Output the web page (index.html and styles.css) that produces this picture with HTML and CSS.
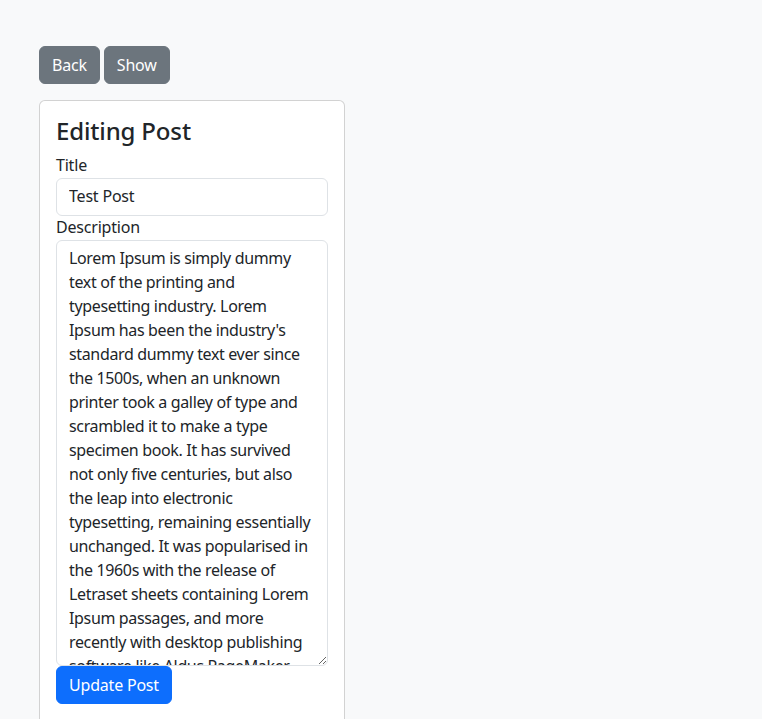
FILE: index.html
```html
<!DOCTYPE html>
<html lang="en">
<head>
<meta charset="utf-8">
<title>Editing Post</title>
<link rel="stylesheet" href="styles.css">
</head>
<body>
<div class="page">
  <div class="actions">
    <a class="btn btn-secondary" href="#">Back</a>
    <a class="btn btn-secondary" href="#">Show</a>
  </div>
  <div class="card">
    <div class="card-body">
      <h4 class="card-title">Editing Post</h4>
      <form class="form">
        <label class="form-label" for="title">Title</label>
        <input class="form-control" id="title" type="text" value="Test Post">
        <label class="form-label" for="desc">Description</label>
        <textarea class="form-control textarea" id="desc" wrap="off">Lorem Ipsum is simply dummy
text of the printing and
typesetting industry. Lorem
Ipsum has been the industry's
standard dummy text ever since
the 1500s, when an unknown
printer took a galley of type and
scrambled it to make a type
specimen book. It has survived
not only five centuries, but also
the leap into electronic
typesetting, remaining essentially
unchanged. It was popularised in
the 1960s with the release of
Letraset sheets containing Lorem
Ipsum passages, and more
recently with desktop publishing
software like Aldus PageMaker
including versions of Lorem Ipsum.</textarea>
        <button class="btn btn-primary" type="button">Update Post</button>
      </form>
    </div>
  </div>
</div>
</body>
</html>
```
FILE: styles.css
```css
* { box-sizing: border-box; }
html, body {
  margin: 0;
  background: #f8f9fa;
  color: #212529;
  font-family: "Noto Sans", "Open Sans", sans-serif;
  font-size: 16px;
  line-height: 24px;
  letter-spacing: -0.2px;
}
.page {
  padding: 46px 0 0 39px;
}
.actions {
  display: flex;
  gap: 4px;
  margin-bottom: 16px;
}
.btn {
  display: inline-block;
  padding: 6px 12px;
  font-family: inherit;
  font-size: 16px;
  line-height: 24px;
  letter-spacing: -0.2px;
  border: 1px solid transparent;
  border-radius: 6px;
  text-decoration: none;
  cursor: pointer;
}
.btn-secondary {
  background: #6c757d;
  border-color: #6c757d;
  color: #fff;
}
.btn-primary {
  background: #0d6efd;
  border-color: #0d6efd;
  color: #fff;
}
.card {
  width: 306px;
  background: #fff;
  border: 1px solid rgba(0,0,0,.175);
  border-radius: 6px;
  min-height: 640px;
}
.card-body {
  padding: 16px;
}
.card-title {
  margin: 0 0 8px;
  font-size: 24px;
  font-weight: 500;
  line-height: 28.8px;
  letter-spacing: -0.15px;
}
.form {
  display: flex;
  flex-direction: column;
  align-items: flex-start;
}
.form-label {
  display: block;
  margin: -1px 0 1px;
}
.form-control {
  display: block;
  width: 100%;
  padding: 5px 12px 7px;
  font-family: inherit;
  font-size: 16px;
  line-height: 24px;
  letter-spacing: -0.2px;
  color: #212529;
  background: #fff;
  border: 1px solid #dee2e6;
  border-radius: 6px;
  margin: 0;
}
.textarea {
  height: 426px;
  resize: vertical;
  overflow: hidden;
  white-space: pre;
  letter-spacing: -0.35px;
}
```
